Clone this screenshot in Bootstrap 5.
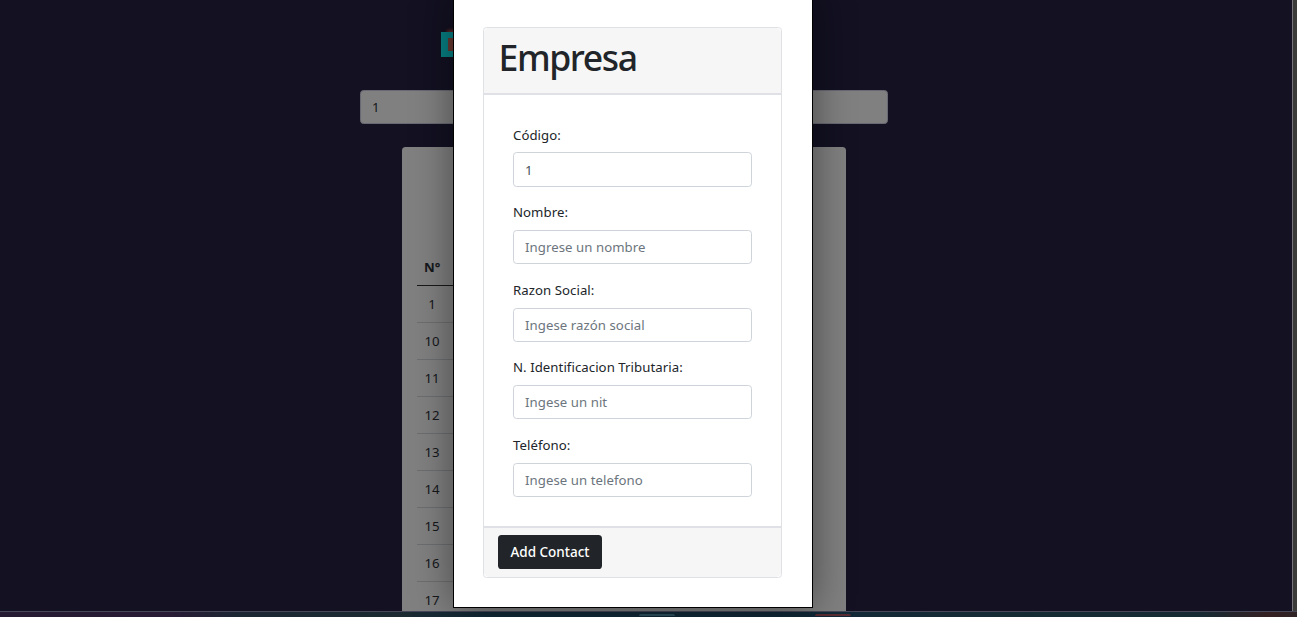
<!DOCTYPE html>
<html lang="es">
<head>
<meta charset="utf-8">
<meta name="viewport" content="width=device-width, initial-scale=1">
<title>Empresa</title>
<link href="https://cdn.jsdelivr.net/npm/bootstrap@5.3.0/dist/css/bootstrap.min.css" rel="stylesheet">
<style>
  body{font-family:"Noto Sans","Open Sans",sans-serif;font-size:13.2px;line-height:21.6px;color:#212529;background:#131122}
  .screen{height:617px}
  .page-area{background:#131122}
  .page-column{width:528px;margin-left:360px;padding-top:27px}
  .scroll-rail{width:5px;background:#3b3b39;border-left:1px solid #77757a}
  .task-strip{height:6px;border-top:1px solid #46485a;background:linear-gradient(90deg,#241a31 0,#281b36 170px,#1b2733 240px,#1b2b31 400px,#122a38 480px,#112838 800px,#162c33 1060px,#162a33 1200px,#351f22 1270px,#2e2326 100%)}
  .task-item{height:2px;width:36px;border-radius:2px 2px 0 0;background:#2d5260;margin-left:639px}
  .task-item.alert-item{background:#5a2b32;margin-left:140px}
  .logo-mark{width:16px;height:25px;margin:5px 0 0 81px;background:#078084;box-shadow:5px -3px 3px -1px #6b2a26}
  .logo-mark i{display:block;width:9px;height:13px;margin:6px 0 0 7px;background:#6b3a33}
  .search-box{height:34px;margin-top:33px;border-color:#686973;border-radius:3.6px;background:#808080;color:#14161a;font-size:13.2px;padding:0 11px}
  .list-card{width:444px;margin:23px 0 0 42px;padding:101px 15px 0;background:#808080;border:0;border-radius:3.6px 3.6px 0 0}
  .list-card table{--bs-table-bg:transparent;--bs-table-color:#15171b;border-color:#6c6e70;width:380px}
  .list-card th,.list-card td{height:37px;padding:3px 7px 0;vertical-align:middle;text-align:left}
  .list-card th{border-bottom:1px solid #18191b;padding-top:4px}
  .list-card td:first-child span{display:inline-block;width:16px;text-align:center}
  .dialog-window{left:453px;top:-10px;width:360px;height:618px;background:#fff;border:1px solid #000;box-shadow:0 0 38px rgba(0,0,0,.45);padding:36px 30px 0 29px}
  .form-card{height:551px;border-color:#dfe1e5;border-radius:3.6px}
  .form-card .card-header{height:67px;padding:8px 14.5px 0;background:#f6f6f6;border-bottom:2px solid #dfe1e6}
  .form-card h1{font-size:35.6px;line-height:43px;font-weight:500;margin:0;letter-spacing:-1.4px}
  .form-card .card-body{padding:29.6px 29px 0}
  .form-card label{display:block;height:21.6px;margin-bottom:6.2px;letter-spacing:.06px}
  .form-card .form-control{height:34.4px;padding:0 11px;border-color:#ced4da;border-radius:3.6px;font-size:13.2px;letter-spacing:.06px;color:#495057;margin-bottom:15.4px}
  .form-control::placeholder{color:#6c757d}
  .form-card .card-footer{height:51px;padding:7px 14px;background:#f6f6f6;border-top:2px solid #dfe1e6}
  .btn-add{display:block;width:104px;height:34px;padding:0;font-size:13.5px;font-weight:500;border-radius:3.6px;background:#212529;color:#fff}
</style>
</head>
<body class="overflow-hidden">
<div class="screen d-flex flex-column position-relative overflow-hidden">
  <div class="d-flex flex-grow-1 overflow-hidden">
    <main class="page-area flex-grow-1 overflow-hidden">
      <div class="page-column">
        <div class="logo-mark"><div class="d-flex"><i></i></div></div>
        <input class="form-control search-box" type="text" value="1" aria-label="Buscar">
        <div class="card list-card">
          <table class="table mb-0">
            <thead><tr><th>N°</th></tr></thead>
            <tbody>
              <tr><td><span>1</span></td></tr>
              <tr><td><span>10</span></td></tr>
              <tr><td><span>11</span></td></tr>
              <tr><td><span>12</span></td></tr>
              <tr><td><span>13</span></td></tr>
              <tr><td><span>14</span></td></tr>
              <tr><td><span>15</span></td></tr>
              <tr><td><span>16</span></td></tr>
              <tr><td><span>17</span></td></tr>
            </tbody>
          </table>
        </div>
      </div>
    </main>
    <div class="scroll-rail flex-shrink-0"></div>
  </div>
  <div class="dialog-window position-absolute">
    <form class="card form-card">
      <div class="card-header"><h1>Empresa</h1></div>
      <div class="card-body">
        <label for="codigo">Código:</label>
        <input id="codigo" class="form-control" type="text" value="1">
        <label for="nombre">Nombre:</label>
        <input id="nombre" class="form-control" type="text" placeholder="Ingrese un nombre">
        <label for="razon">Razon Social:</label>
        <input id="razon" class="form-control" type="text" placeholder="Ingese razón social">
        <label for="nit">N. Identificacion Tributaria:</label>
        <input id="nit" class="form-control" type="text" placeholder="Ingese un nit">
        <label for="telefono">Teléfono:</label>
        <input id="telefono" class="form-control" type="text" placeholder="Ingese un telefono">
      </div>
      <div class="card-footer"><button type="button" class="btn btn-add">Add Contact</button></div>
    </form>
  </div>
  <div class="task-strip d-flex flex-shrink-0"><span class="task-item align-self-center"></span><span class="task-item alert-item align-self-center"></span></div>
</div>
<script src="https://cdn.jsdelivr.net/npm/bootstrap@5.3.0/dist/js/bootstrap.bundle.min.js"></script>
</body>
</html>
